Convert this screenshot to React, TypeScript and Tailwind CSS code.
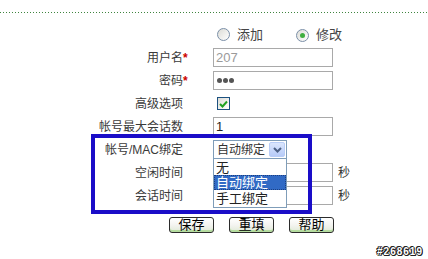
import React from 'react';

const font = "font-['Liberation_Sans','Noto_Sans_CJK_SC',sans-serif]";

const Radio: React.FC<{ checked?: boolean }> = ({ checked }) => (
  <span className="inline-flex h-[13px] w-[13px] items-center justify-center rounded-full border border-[#7b8fa8] bg-gradient-to-br from-[#dcdcd6] to-white">
    {checked && <span className="h-[5px] w-[5px] rounded-full bg-[#3fae3f]" />}
  </span>
);

const Row: React.FC<{ label: string; star?: boolean; children?: React.ReactNode }> = ({ label, star, children }) => (
  <div className="flex h-[23px] items-center">
    <div className="w-[183px] text-right text-[12px] leading-none text-[#3a3a3a]">{label}</div>
    <div className="w-[9px] text-[12px] leading-none font-bold text-[#c00]">{star ? '*' : ''}</div>
    <div className="ml-[21px] flex items-center">{children}</div>
  </div>
);

const TextBox: React.FC<{ value?: string; muted?: boolean }> = ({ value, muted }) => (
  <div
    className={`flex h-[19px] w-[120px] items-center border border-[#a9a9a9] bg-white px-[2px] text-[13px] leading-none ${
      muted ? 'text-[#9a9a9a]' : 'text-[#222]'
    }`}
  >
    {value}
  </div>
);

const Btn: React.FC<{ label: string }> = ({ label }) => (
  <div className="flex h-[16px] w-[45px] items-center justify-center rounded-[3px] border border-[#2b2b2b] bg-gradient-to-b from-white via-[#f4f4f0] to-[#dfe9d6] text-[13px] leading-none text-black shadow-[inset_0_-2px_0_#b5dca0]">
    {label}
  </div>
);

export default function App() {
  return (
    <div className={`relative h-[259px] w-[428px] overflow-hidden bg-white pt-[12px] ${font}`}>
      <div className="h-[1px] bg-[linear-gradient(to_right,#3f853f_1px,transparent_1px)] bg-[length:3px_1px]" />

      <div className="mt-[10px]">
        <div className="flex h-[23px] items-center pl-[217px] text-[13px] leading-none text-[#444]">
          <Radio />
          <span className="ml-[7px]">添加</span>
          <span className="ml-[33px]">
            <Radio checked />
          </span>
          <span className="ml-[7px]">修改</span>
        </div>

        <Row label="用户名" star>
          <TextBox value="207" muted />
        </Row>
        <Row label="密码" star>
          <div className="flex h-[19px] w-[120px] items-center gap-[1px] border border-[#a9a9a9] bg-white px-[3px]">
            <span className="h-[5px] w-[5px] rounded-full bg-[#555]" />
            <span className="h-[5px] w-[5px] rounded-full bg-[#555]" />
            <span className="h-[5px] w-[5px] rounded-full bg-[#555]" />
          </div>
        </Row>
        <Row label="高级选项">
          <div className="ml-[4px] flex h-[13px] w-[13px] items-center justify-center border border-[#1c5180] bg-gradient-to-br from-[#dcdcd6] to-white">
            <svg width="9" height="8" viewBox="0 0 9 8">
              <path d="M1 4 L3.5 6.5 L8 1.5" fill="none" stroke="#21a121" strokeWidth="2" />
            </svg>
          </div>
        </Row>
        <Row label="帐号最大会话数">
          <TextBox value="1" />
        </Row>
        <Row label="帐号/MAC绑定">
          <div className="flex h-[19px] w-[74px] items-center justify-between border border-[#7f9db9] bg-white pl-[3px] pr-[1px] text-[12px] leading-none text-[#333]">
            <span>自动绑定</span>
            <span className="flex h-[15px] w-[16px] items-center justify-center rounded-[2px] border border-[#b9cdf7] bg-gradient-to-b from-[#dbe6fd] to-[#b7cbf8]">
              <svg width="9" height="6" viewBox="0 0 9 6">
                <path d="M1 1 L4.5 4.5 L8 1" fill="none" stroke="#4d6185" strokeWidth="2" />
              </svg>
            </span>
          </div>
        </Row>
        <Row label="空闲时间">
          <TextBox />
          <span className="ml-[5px] text-[12px] text-[#333]">秒</span>
        </Row>
        <Row label="会话时间">
          <TextBox />
          <span className="ml-[5px] text-[12px] text-[#333]">秒</span>
        </Row>

        <div className="mt-[6px] flex h-[23px] items-center gap-[15px] pl-[169px]">
          <Btn label="保存" />
          <Btn label="重填" />
          <Btn label="帮助" />
        </div>
      </div>

      {/* annotation frame */}
      <div className="pointer-events-none absolute left-[91px] top-[134px] h-[80px] w-[221px] border-4 border-[#1a0dc8]" />

      {/* open dropdown list */}
      <div className="absolute left-[213px] top-[158px] flex w-[74px] flex-col border border-[#7f9db9] bg-white py-[1px] text-[13px] leading-none text-[#222]">
        <div className="flex h-[15px] items-center pl-[2px]">无</div>
        <div className="flex h-[15px] items-center border border-dotted border-[#1c3f80] bg-[#316ac5] pl-[1px] text-white">自动绑定</div>
        <div className="flex h-[16px] items-center pl-[2px]">手工绑定</div>
      </div>

      <div className="absolute bottom-[2px] right-[5px] text-[10px] font-bold leading-none tracking-[1px] text-white [text-shadow:1px_0_0_#222,-1px_0_0_#222,0_1px_0_#222,0_-1px_0_#222,1px_1px_0_#222,-1px_-1px_0_#222]">
        #268619
      </div>
    </div>
  );
}
